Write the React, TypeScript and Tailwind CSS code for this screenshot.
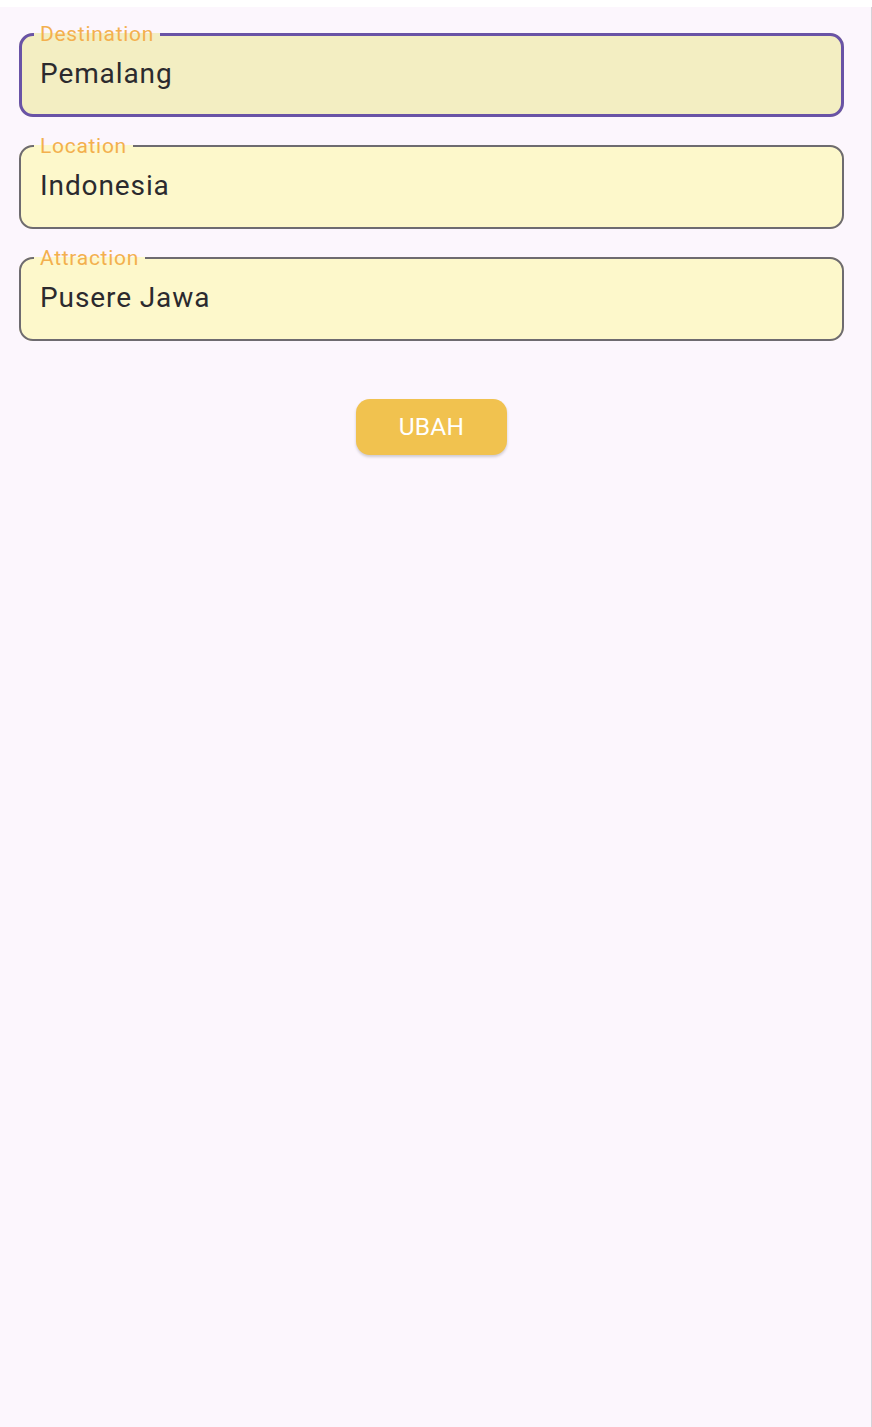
import React from "react";

type Field = { label: string; value: string; focused?: boolean };

const fields: Field[] = [
  { label: "Destination", value: "Pemalang", focused: true },
  { label: "Location", value: "Indonesia" },
  { label: "Attraction", value: "Pusere Jawa" },
];

export default function App() {
  return (
    <div className="min-h-[1427px] w-[872px] bg-white font-['Roboto',sans-serif]">
      <div className="mt-[7px] min-h-[1420px] border-r border-[#d6d2d8] bg-[#fcf6fd]">
        <div className="flex w-[863px] flex-col gap-[17px] px-[19px] pt-[15px]">
          {fields.map((f) => (
            <OutlinedField key={f.label} {...f} />
          ))}
          <button className="mt-[41px] h-[56px] w-[151px] self-center rounded-[14px] bg-[#f1c24f] text-[24.5px] tracking-[0.2px] text-white shadow-[0_2px_3px_rgba(0,0,0,0.18)]">
            UBAH
          </button>
        </div>
      </div>
    </div>
  );
}

function OutlinedField({ label, value, focused }: Field) {
  return (
    <fieldset
      className={
        focused
          ? "rounded-[14px] border-[3px] border-[#6953a6] bg-[#f3eec2] pb-[24px]"
          : "rounded-[14px] border-2 border-[#6e6b70] bg-[#fdf8cb] pb-[25px]"
      }
    >
      <legend
        className={
          (focused ? "ml-[12px]" : "ml-[13px]") +
          " px-[6px] text-[21px] leading-[24px] tracking-[0.7px] text-[#f3b04e]"
        }
      >
        {label}
      </legend>
      <div
        className={
          (focused ? "pl-[18px]" : "pl-[19px]") +
          " pt-[12px] text-[28px] leading-[32px] tracking-[0.9px] text-[#2b2a2e]"
        }
      >
        {value}
      </div>
    </fieldset>
  );
}
